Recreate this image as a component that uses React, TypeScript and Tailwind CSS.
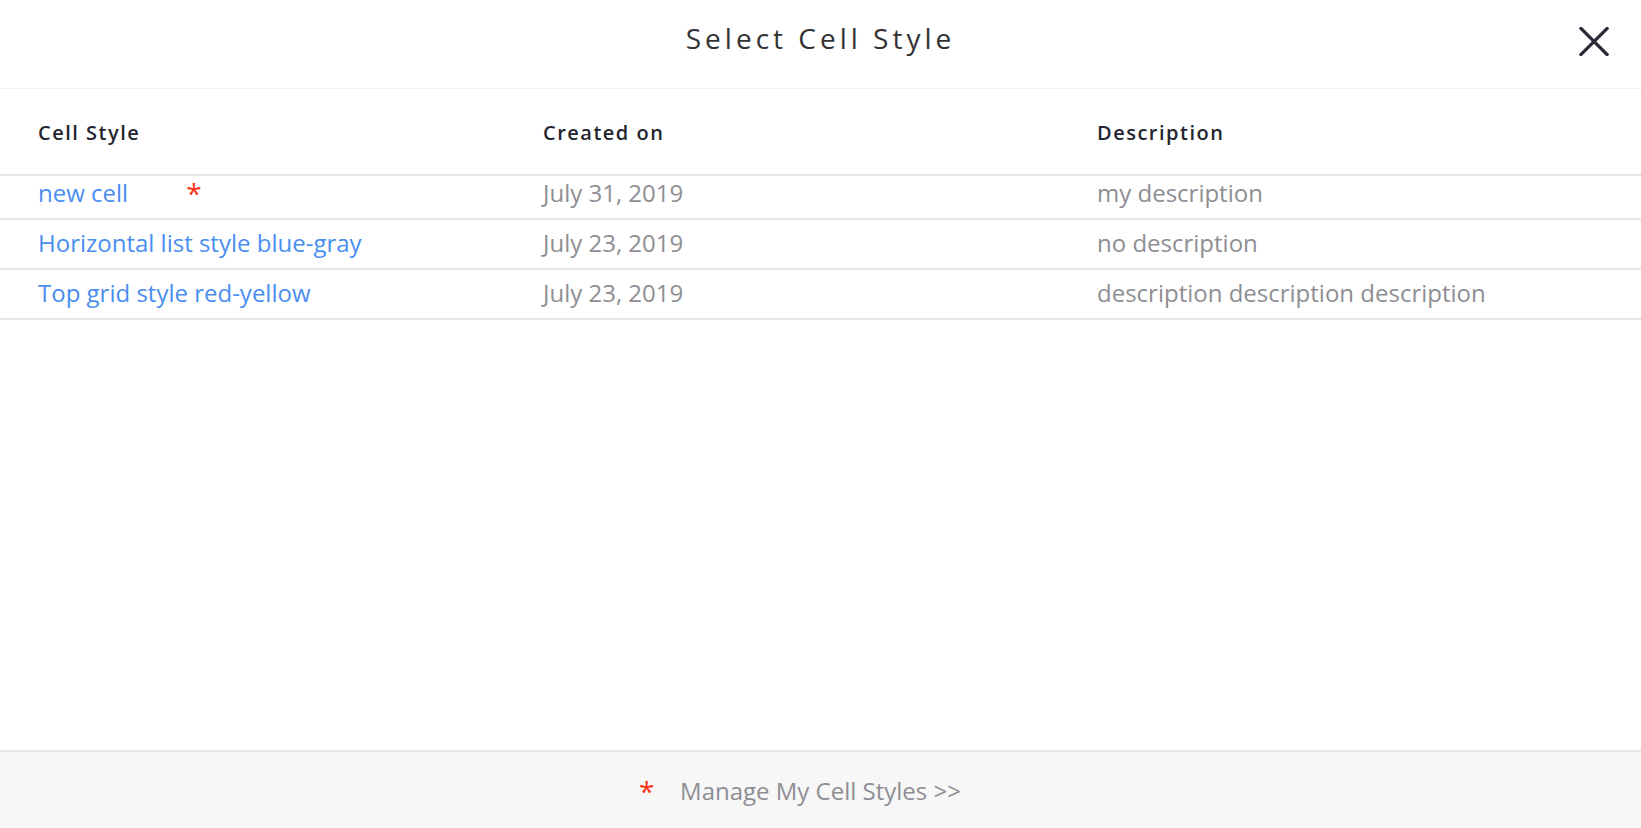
const rows = [
  { name: 'new cell', date: 'July 31, 2019', desc: 'my description', starred: true },
  { name: 'Horizontal list style blue-gray', date: 'July 23, 2019', desc: 'no description', starred: false },
  { name: 'Top grid style red-yellow', date: 'July 23, 2019', desc: 'description description description', starred: false },
];

function CloseIcon() {
  return (
    <svg width="30" height="29" viewBox="0 0 30 29" fill="none">
      <path d="M2 1.5L28 27.5M28 1.5L2 27.5" stroke="#2a2b36" strokeWidth="3.2" strokeLinecap="square" />
    </svg>
  );
}

export default function App() {
  return (
    <div className="flex h-[828px] flex-col bg-white font-['Open_Sans',sans-serif]">
      {/* header */}
      <header className="grid h-[89px] grid-cols-[1fr_auto_1fr] border-b border-[#f1f1f1]">
        <div />
        <h1 className="pt-[17px] text-[28px] leading-[42px] font-normal tracking-[4px] text-[#333333]">
          Select Cell Style
        </h1>
        <div className="flex justify-end pt-[27px] pr-[32px]">
          <button className="h-[29px] w-[30px]">
            <CloseIcon />
          </button>
        </div>
      </header>

      {/* table */}
      <div className="grid h-[87px] grid-cols-[505px_554px_1fr] border-b-2 border-[#e6e6e6] pt-[29px] text-[20px] leading-[30px] font-semibold tracking-[1.5px] text-[#25252f]">
        <div className="pl-[38px]">Cell Style</div>
        <div className="pl-[38px]">Created on</div>
        <div className="pl-[38px]">Description</div>
      </div>

      {rows.map((r, i) => (
        <div
          key={r.name}
          className={
            'grid grid-cols-[505px_554px_1fr] border-b-2 border-[#e6e6e6] text-[24px] leading-[34px] ' +
            (i === 0 ? 'h-[44px]' : 'h-[50px] pt-[6px]')
          }
        >
          <div className="flex pl-[38px] text-[#4a8ef0]">
            <span>{r.name}</span>
            {r.starred && <span className="ml-[58px] text-[28px] leading-[34px] text-[#ff3118]">*</span>}
          </div>
          <div className="pl-[38px] text-[#8e8e93]">{r.date}</div>
          <div className="pl-[38px] text-[#8e8e93]">{r.desc}</div>
        </div>
      ))}

      <div className="flex-1" />

      {/* footer */}
      <footer className="flex h-[78px] justify-center border-t-2 border-[#e8e8e8] bg-[#f7f7f7] pt-[21px]">
        <span className="relative text-[24px] leading-[36px] text-[#8e8e93]">
          <span className="absolute top-0 left-[-41px] text-[28px] leading-[36px] text-[#ff3118]">*</span>
          Manage My Cell Styles &gt;&gt;
        </span>
      </footer>
    </div>
  );
}
